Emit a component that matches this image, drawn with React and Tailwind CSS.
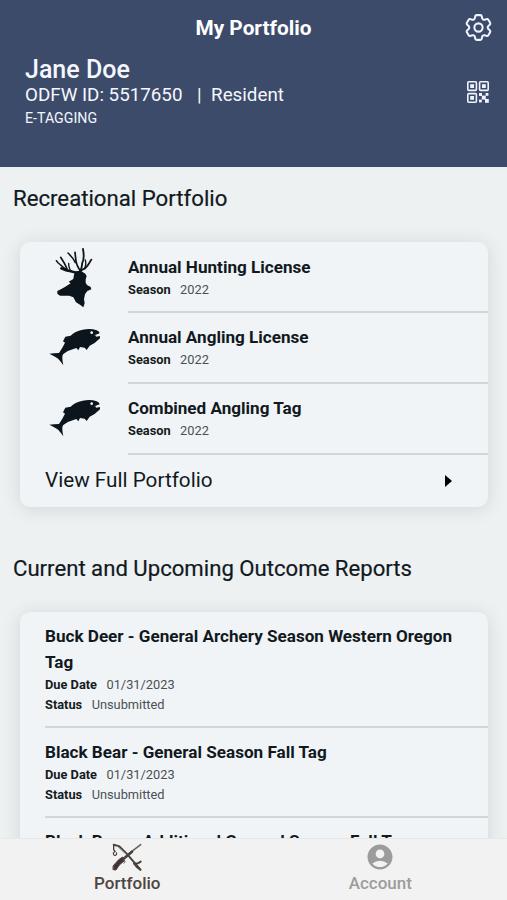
import React, { useState } from 'react';
import { HiOutlineCog6Tooth } from 'react-icons/hi2';
import { MdAccountCircle } from 'react-icons/md';

const licenses = [
  { name: 'Annual Hunting License', season: '2022', icon: 'deer' },
  { name: 'Annual Angling License', season: '2022', icon: 'fish' },
  { name: 'Combined Angling Tag', season: '2022', icon: 'fish' },
];

const reports = [
  { name: 'Buck Deer - General Archery Season Western Oregon Tag', due: '01/31/2023', status: 'Unsubmitted' },
  { name: 'Black Bear - General Season Fall Tag', due: '01/31/2023', status: 'Unsubmitted' },
  { name: 'Black Bear - Additional General Season Fall Tag', due: '01/31/2023', status: 'Unsubmitted' },
];

const DeerIcon = () => (
  <svg viewBox="0 6 210 204" className="w-[70px] h-[68px]" fill="#0c151b">
    <path d="M52 153 L64 147 L76 140 L92 130 L86 125 L100 117 L102 104 L106 94 L122 92 L136 101 L140 108 L137 118 L137 128 L141 135 L152 141 L154 148 L142 153 L135 163 L132 178 L134 190 L130 202 L120 194 L108 187 L100 172 L88 167 L60 167 L52 161 Z" />
    <g fill="none" stroke="#0c151b" strokeLinecap="round" strokeLinejoin="round">
      <path d="M110 100 Q104 96 92 94 Q78 92 64 85" strokeWidth="7.5" />
      <path d="M86 93 Q70 84 62 75 Q52 68 49 62" strokeWidth="4.5" />
      <path d="M83 91 Q76 72 62 52" strokeWidth="5" />
      <path d="M94 94 Q86 86 86 70" strokeWidth="4" />
      <path d="M118 98 Q122 90 134 86 Q144 78 154 59" strokeWidth="5.5" />
      <path d="M120 98 Q126 82 127 68 Q134 56 129 27" strokeWidth="5.5" />
      <path d="M120 92 Q110 76 108 64 L105 37" strokeWidth="5" />
      <path d="M106 68 Q100 54 84 39" strokeWidth="4.5" />
      <path d="M133 86 Q140 74 136 60" strokeWidth="4" />
    </g>
  </svg>
);

const FishIcon = () => (
  <svg viewBox="0 0 210 150" className="w-[70px] h-[50px]">
    <path
      fill="#0c151b"
      d="M28 101 Q42 99 57 99 Q66 86 75 68 L69 64 L76 50 L92 47 Q104 33 128 29 Q152 24 170 31 Q178 34 179 40 L163 46 L180 48 L180 55 Q166 70 149 77 L140 90 L134 83 L120 81 L115 91 L109 84 Q86 90 70 102 Q66 106 67 114 Q67 124 70 136 Q58 118 50 113 Q40 107 28 101 Z"
    />
    <circle cx="155" cy="38" r="4" fill="#f0f4f8" />
    <path d="M167 46 L181 43 L181 48 L168 50 Z" fill="#f0f4f8" />
  </svg>
);

const QrIcon = () => (
  <svg viewBox="0 0 22 22" className="w-[22px] h-[22px]" fill="#eef3fc">
    <g fill="none" stroke="#eef3fc" strokeWidth="1.6">
      <rect x="0.8" y="0.8" width="8.6" height="8.6" rx="1" />
      <rect x="12.6" y="0.8" width="8.6" height="8.6" rx="1" />
      <rect x="0.8" y="12.6" width="8.6" height="8.6" rx="1" />
    </g>
    <rect x="3.2" y="3.2" width="3.8" height="3.8" />
    <rect x="15" y="3.2" width="3.8" height="3.8" />
    <rect x="3.2" y="15" width="3.8" height="3.8" />
    <rect x="12" y="12" width="3" height="3" />
    <rect x="18.6" y="12" width="2.8" height="2.8" />
    <rect x="14.8" y="14.6" width="4" height="4" />
    <rect x="12" y="18.6" width="2.8" height="2.8" />
    <rect x="18" y="18" width="3.8" height="3.8" />
  </svg>
);

// crossed rifle and fishing rod
const GearIcon = () => (
  <svg viewBox="0 0 90 84" className="w-[30px] h-[28px]" fill="none" stroke="#4a423e" strokeLinecap="round">
    <path d="M86 5 L44 37" strokeWidth="5" stroke="#6b6460" />
    <path d="M60 26 L34 48" strokeWidth="8" />
    <path d="M4 68 L20 50 L32 42 L36 54 L22 66 L12 81 L4 80 Z" fill="#40332f" strokeWidth="3" />
    <path d="M38 52 Q42 58 36 61" strokeWidth="2.5" />
    <path d="M5 5 L22 10 L46 34 L82 76" strokeWidth="6" />
    <path d="M16 10 L42 33" strokeWidth="3" stroke="#8b8581" />
    <path d="M5 5 L5 20 L9 25" strokeWidth="4" />
    <path d="M9 25 L4 30 Q4 38 10 37 Q16 35 13 29" strokeWidth="3.5" />
    <path d="M66 62 L78 61 L86 56 M70 66 L76 73" strokeWidth="6" />
    <path d="M74 70 L85 80" strokeWidth="7" />
  </svg>
);

const Field = ({ label, value }) => (
  <p className="text-[12.8px] leading-5 text-[#4b5054]">
    <span className="mr-[9.5px] font-bold text-[#151b20]">{label}</span>
    {value}
  </p>
);

const Card = ({ children }) => (
  <div className="ml-5 mr-[19px] overflow-hidden rounded-[10px] bg-[#f0f4f7] shadow-[0_2px_18px_rgba(40,60,60,0.14)]">
    {children}
  </div>
);

const App = () => {
  const [tab, setTab] = useState('portfolio');

  return (
    <div className="flex h-[900px] w-full flex-col overflow-hidden bg-[#edf1f2] font-[Roboto,sans-serif] text-[#12191e]">
      {/* Header */}
      <header className="h-[167px] shrink-0 bg-[#3d4b6b] text-[#f4f7fd]">
        <div className="grid h-14 grid-cols-[1fr_auto_1fr] items-center">
          <h1 className="col-start-2 pt-0.5 text-[20.8px] font-bold text-white">My Portfolio</h1>
          <button className="mr-3 justify-self-end pb-px text-[#eef3fc]">
            <HiOutlineCog6Tooth size={33} />
          </button>
        </div>
        <div className="flex items-start justify-between pl-[25px] pr-[18px]">
          <div>
            <h2 className="text-[25px] font-medium leading-[28px]">Jane Doe</h2>
            <p className="text-[18.8px] leading-[22px]">
              ODFW ID: 5517650<span className="ml-[14.5px] mr-[9.5px]">|</span>Resident
            </p>
            <p className="mt-0.5 text-[14.2px] leading-5">E-TAGGING</p>
          </div>
          <button className="mt-[25px]">
            <QrIcon />
          </button>
        </div>
      </header>

      {/* Content */}
      <main className="min-h-0 flex-1 overflow-hidden">
        <h3 className="pl-[13px] pt-4 pb-px text-[22.2px] leading-[30px] [-webkit-text-stroke:0.2px_#12191e]">
          Recreational Portfolio
        </h3>
        <div className="mt-7">
          <Card>
            {licenses.map((item, i) => (
              <div key={item.name} className="flex">
                <div className={item.icon === 'deer' ? 'w-[108px] pl-5' : 'w-[108px] pl-5 pt-[7px]'}>
                  {item.icon === 'deer' ? <DeerIcon /> : <FishIcon />}
                </div>
                <div
                  className={`h-[71px] flex-1 border-b-2 border-[#d2d6d9] ${i === 0 ? 'pt-3' : 'pt-[11px]'}`}
                >
                  <h4 className="text-[17.1px] font-bold leading-[26px]">{item.name}</h4>
                  <Field label="Season" value={item.season} />
                </div>
              </div>
            ))}
            <button className="flex h-[52px] w-full items-center justify-between pl-[25px] pr-9 text-[20.7px]">
              View Full Portfolio
              <svg viewBox="0 0 7 12" className="h-3 w-[7px]">
                <path d="M0 0 L7 6 L0 12 Z" fill="#000" />
              </svg>
            </button>
          </Card>
        </div>

        <h3 className="mt-[46px] pl-[13px] pb-px text-[22.15px] leading-[30px] [-webkit-text-stroke:0.2px_#12191e]">
          Current and Upcoming Outcome Reports
        </h3>
        <div className="mt-7">
          <Card>
            {reports.map((r) => (
              <div key={r.name} className="ml-[25px] border-b-2 border-[#d2d6d9] pb-[11px] pt-[11px] last:pt-[10px]">
                <h4 className="pr-5 text-[17.1px] font-bold leading-[26px]">{r.name}</h4>
                <Field label="Due Date" value={r.due} />
                <Field label="Status" value={r.status} />
              </div>
            ))}
          </Card>
        </div>
      </main>

      {/* Bottom tabs */}
      <nav className="grid h-[62px] shrink-0 grid-cols-2 border-t border-[#e6e8e8] bg-[#f2f2f2] text-[17px] font-medium">
        <button
          onClick={() => setTab('portfolio')}
          className={`flex flex-col items-center pl-px pt-1 ${tab === 'portfolio' ? 'text-[#4d4541]' : 'text-[#9c9c9c]'}`}
        >
          <GearIcon />
          <span className="leading-6">Portfolio</span>
        </button>
        <button
          onClick={() => setTab('account')}
          className={`flex flex-col items-center pt-[3px] ${tab === 'account' ? 'text-[#4d4541]' : 'text-[#9c9c9c]'}`}
        >
          <MdAccountCircle size={30} />
          <span className="-mt-px leading-6">Account</span>
        </button>
      </nav>
    </div>
  );
};

export default App;
